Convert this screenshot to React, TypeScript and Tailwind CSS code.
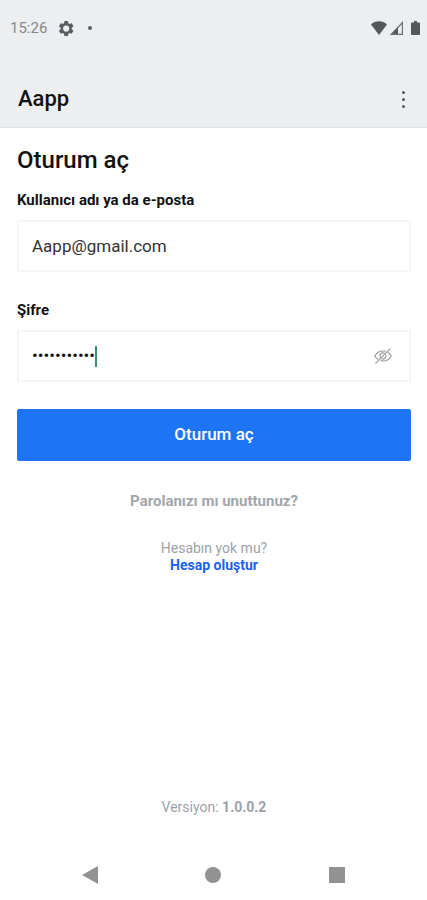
import { useState } from "react";

function GearIcon() {
  return (
    <svg viewBox="0 0 24 24" className="h-[15px] w-[15px]" fill="#5a5c5e" aria-hidden="true">
      <path
        fillRule="evenodd"
        d="M20.300 13.200a8.500 8.500 0 0 0 0-2.400l2.500-2a.6.6 0 0 0 .1-.8l-2.400-4.100a.6.6 0 0 0-.7-.2l-2.900 1.200a8.800 8.800 0 0 0-2-1.200L14.500.6a.6.6 0 0 0-.6-.5H9.100a.6.6 0 0 0-.6.5l-.4 3.100a8.800 8.800 0 0 0-2 1.200L3.200 3.700a.6.6 0 0 0-.7.2L.1 8a.6.6 0 0 0 .1.800l2.500 2a8.500 8.500 0 0 0 0 2.400l-2.500 2a.6.6 0 0 0-.1.800l2.400 4.100c.1.200.4.300.7.200l2.900-1.200a8.800 8.800 0 0 0 2 1.200l.4 3.100c0 .3.300.5.600.5h4.800c.3 0 .6-.2.600-.5l.4-3.100a8.800 8.800 0 0 0 2-1.200l2.900 1.200c.3.1.6 0 .7-.2l2.400-4.100a.6.6 0 0 0-.1-.8zM11.500 17a5 5 0 1 1 0-10 5 5 0 0 1 0 10z"
      />
    </svg>
  );
}

function StatusIcons() {
  return (
    <div className="flex items-center">
      <svg viewBox="0 0 16 14" className="h-[14px] w-4" aria-hidden="true">
        <path d="M8 14 0 3.500C2 1.500 5 .3 8 .3s6 1.200 8 3.200z" fill="#555759" />
      </svg>
      <svg viewBox="0 0 13 14" className="ml-[3px] h-[14px] w-[13px]" aria-hidden="true">
        <path d="M0 14 8 5.500V14z" fill="#555759" />
        <path d="M1.500 13.400 12.400 1.500v11.900z" fill="none" stroke="#6d6f71" strokeWidth="1.200" />
      </svg>
      <svg viewBox="0 0 9 14" className="ml-2 h-[14px] w-[9px]" aria-hidden="true">
        <path d="M3 0h3v1.500h2a1 1 0 0 1 1 1V13a1 1 0 0 1-1 1H1a1 1 0 0 1-1-1V2.500a1 1 0 0 1 1-1h2z" fill="#555759" />
      </svg>
    </div>
  );
}

function EyeOffIcon() {
  return (
    <svg viewBox="0 0 18 16" className="h-4 w-[18px]" fill="none" stroke="#9a9c9e" strokeWidth="1.200" strokeLinecap="round" aria-hidden="true">
      <path d="M11 3.200A10 10 0 0 0 8.800 3C5.200 3 2.500 5 .8 8c.7 1.300 1.700 2.400 3 3.200" />
      <path d="M14 4.500c1.300.8 2.500 2 3.200 3.500-1.700 3-4.500 5-8 5a9 9 0 0 1-2.200-.3" />
      <path d="M10.300 5.300A3 3 0 0 0 6.200 9.200M11.800 7.200a3 3 0 0 1-4 3.600" />
      <path d="M1.800 15.200 16 .8" />
    </svg>
  );
}

export default function App() {
  const [email, setEmail] = useState("Aapp@gmail.com");
  const [password, setPassword] = useState("aapp1234567");
  const [visible, setVisible] = useState(false);

  return (
    <div className="flex min-h-screen flex-col bg-white font-['Roboto',sans-serif] text-[#111]">
      <header className="border-b border-[#dfe1e3] bg-[#eceef0]">
        <div className="flex h-14 items-center justify-between pr-[7px] pl-[10px]">
          <div className="flex items-center gap-3">
            <span className="text-[15px] text-[#85878a]">15:26</span>
            <GearIcon />
            <span className="ml-0.5 h-1 w-1 rounded-full bg-[#5a5c5e]" />
          </div>
          <StatusIcons />
        </div>
        <div className="flex items-center justify-between pt-[29px] pr-4 pb-[14px] pl-[18px]">
          <h1 className="text-[22px] leading-7 font-medium">Aapp</h1>
          <button type="button" aria-label="Menü" className="flex w-4 flex-col items-center gap-1">
            <span className="h-[3px] w-[3px] rounded-full bg-[#55575a]" />
            <span className="h-[3px] w-[3px] rounded-full bg-[#55575a]" />
            <span className="h-[3px] w-[3px] rounded-full bg-[#55575a]" />
          </button>
        </div>
      </header>

      <main className="flex flex-1 flex-col pr-4 pl-[17px]">
        <form onSubmit={(e) => e.preventDefault()}>
          <h2 className="mt-4 text-2xl leading-8 font-medium">Oturum aç</h2>
          <label htmlFor="email" className="mt-3 block text-[15px] leading-6 font-bold">
            Kullanıcı adı ya da e-posta
          </label>
          <input
            id="email"
            type="email"
            value={email}
            onChange={(e) => setEmail(e.target.value)}
            className="mt-2 block h-[52px] w-full rounded-xs border-2 border-[#f5f5f6] px-[13px] text-[17px] text-[#333] outline-none"
          />
          <label htmlFor="password" className="mt-[26px] block text-[15px] leading-6 font-bold">
            Şifre
          </label>
          <div className="mt-2 flex h-[52px] items-center rounded-xs border-2 border-[#f5f5f6] px-[13px]">
            <input
              id="password"
              type={visible ? "text" : "password"}
              value={password}
              onChange={(e) => setPassword(e.target.value)}
              className="field-sizing-content text-[17px] text-[#111] outline-none"
            />
            <span className="h-[21px] w-0.5 bg-[#35907a]" />
            <button
              type="button"
              aria-label="Şifreyi göster"
              onClick={() => setVisible(!visible)}
              className="ml-auto pr-1"
            >
              <EyeOffIcon />
            </button>
          </div>
          <button
            type="submit"
            className="mt-[27px] block h-[52px] w-full rounded-xs bg-[#1d74f5] text-[17px] font-medium text-white"
          >
            Oturum aç
          </button>
        </form>

        <a href="#sifre" className="mt-7 self-center text-[15px] leading-6 font-bold text-[#a3a6aa]">
          Parolanızı mı unuttunuz?
        </a>
        <p className="mt-[27px] text-center text-[14px] leading-[17px] text-[#9ea2a8]">
          Hesabın yok mu?
          <br />
          <a href="#kayit" className="font-bold text-[#1d5ff0]">
            Hesap oluştur
          </a>
        </p>
        <p className="mt-auto mb-[31px] text-center text-[14px] leading-6 text-[#9ea2a8]">
          Versiyon: <span className="font-bold">1.0.0.2</span>
        </p>
      </main>

      <nav className="flex h-[50px] items-center justify-around px-7">
        <button type="button" aria-label="Geri">
          <svg viewBox="0 0 16 18" className="h-[18px] w-4" fill="#929292">
            <path d="M16 0v18L0 9z" />
          </svg>
        </button>
        <button type="button" aria-label="Ana ekran" className="h-4 w-4 rounded-full bg-[#929292]" />
        <button type="button" aria-label="Son uygulamalar" className="h-4 w-4 bg-[#929292]" />
      </nav>
    </div>
  );
}
